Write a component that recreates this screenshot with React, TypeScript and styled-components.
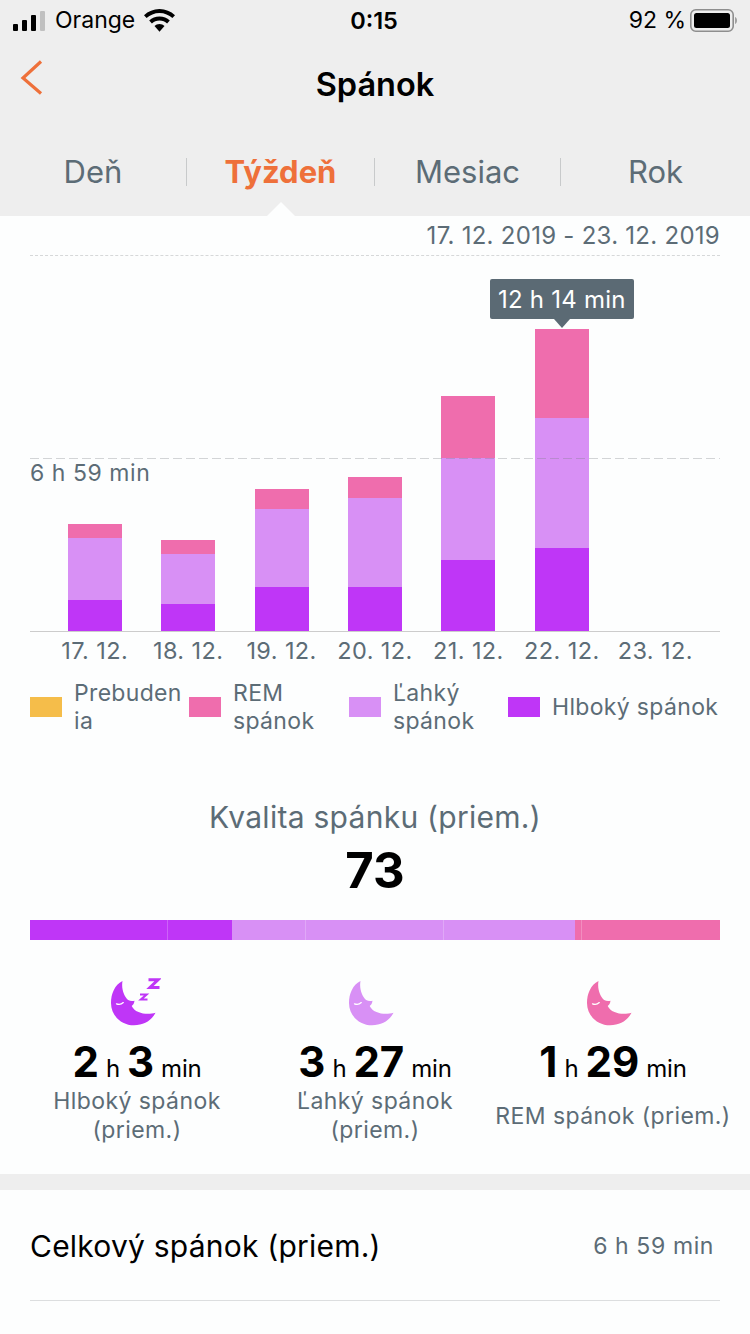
import React from 'react';
import styled, { createGlobalStyle } from 'styled-components';

const GlobalStyle = createGlobalStyle`
  html, body {
    margin: 0;
    padding: 0;
    background: #fdfefe;
  }
  * {
    box-sizing: border-box;
  }
`;

const DEEP = '#bf36f7';
const LIGHT = '#d890f5';
const REM = '#ef6dad';
const AWAKE = '#f5bd4a';
const MUTED = '#5c6c76';
const ACCENT = '#ee703a';

const Page = styled.div`
  width: 750px;
  height: 1334px;
  overflow: hidden;
  background: #fdfefe;
  font-family: Inter, 'Noto Sans', sans-serif;
  color: ${MUTED};
`;

const Header = styled.header`
  background: #eeeeee;
  height: 216px;
`;

const StatusBar = styled.div`
  height: 40px;
  padding: 0 13px 0 13px;
  display: grid;
  grid-template-columns: 1fr auto 1fr;
  align-items: center;
  color: #000;
  font-size: 23px;
`;

const StatusLeft = styled.div`
  display: flex;
  align-items: center;
  gap: 9px;
`;

const StatusRight = styled.div`
  display: flex;
  align-items: center;
  justify-content: flex-end;
  gap: 4px;
`;

const Clock = styled.div`
  font-weight: 600;
  font-size: 23.5px;
  margin-right: 2px;
`;

const NavBar = styled.div`
  position: relative;
  height: 88px;
  display: flex;
  align-items: center;
  justify-content: center;
  color: #000;
  font-size: 32.500px;
  font-weight: 600;
`;

const BackButton = styled.button`
  position: absolute;
  left: 20px;
  top: 20px;
  padding: 0;
  border: none;
  background: none;
  display: flex;
`;

const Tabs = styled.nav`
  position: relative;
  height: 88px;
  display: grid;
  grid-template-columns: 187px 188px 186px 189px;
  align-items: center;
`;

const Tab = styled.div<{ $active?: boolean; $divider?: boolean }>`
  position: relative;
  text-align: center;
  font-size: 31px;
  font-weight: ${p => (p.$active ? 700 : 400)};
  color: ${p => (p.$active ? ACCENT : MUTED)};
  border-right: ${p => (p.$divider ? '1px solid #c8cacb' : 'none')};
  height: 28px;
  line-height: 28px;
`;

const Notch = styled.div`
  position: absolute;
  left: 267px;
  bottom: 0;
  width: 0;
  height: 0;
  border-left: 14px solid transparent;
  border-right: 14px solid transparent;
  border-bottom: 14px solid #fdfefe;
`;

const Content = styled.section`
  padding: 0 30px;
`;

const DateRange = styled.div`
  height: 40px;
  padding-top: 5px;
  text-align: right;
  font-size: 24px;
  line-height: 30px;
  letter-spacing: 0.27px;
  border-bottom: 1px dashed #d6d8d9;
`;

const Chart = styled.div`
  position: relative;
  height: 376px;
  padding: 0 18px;
  display: grid;
  grid-template-columns: repeat(7, 1fr);
  align-items: end;
  border-bottom: 1px solid #cccccc;
`;

const GridLine = styled.div`
  position: absolute;
  z-index: 1;
  left: 0;
  right: 0;
  top: 202px;
  height: 1px;
  background: repeating-linear-gradient(
    to right,
    rgba(120, 125, 130, 0.32) 0 9px,
    transparent 9px 13px
  );
`;

const AverageLabel = styled.div`
  position: absolute;
  left: 0;
  top: 202px;
  font-size: 23px;
  line-height: 30px;
  letter-spacing: 0.55px;
`;

const Column = styled.div`
  position: relative;
  width: 54px;
  justify-self: center;
  display: flex;
  flex-direction: column;
`;

const Segment = styled.div<{ $h: number; $color: string }>`
  height: ${p => p.$h}px;
  background: ${p => p.$color};
`;

const Tooltip = styled.div`
  position: absolute;
  left: 50%;
  bottom: calc(100% + 10px);
  transform: translateX(-50%);
  width: 144px;
  height: 40px;
  border-radius: 2px;
  background: #5b6a74;
  color: #fff;
  font-size: 24px;
  line-height: 42px;
  letter-spacing: 0.22px;
  text-align: center;
  white-space: nowrap;

  &::after {
    content: '';
    position: absolute;
    left: 50%;
    top: 100%;
    margin-left: -8px;
    border-left: 8px solid transparent;
    border-right: 8px solid transparent;
    border-top: 9px solid #5b6a74;
  }
`;

const DayLabels = styled.div`
  height: 36px;
  padding: 0 18px;
  display: grid;
  grid-template-columns: repeat(7, 1fr);
  align-items: center;
  text-align: center;
  font-size: 23.500px;
  letter-spacing: 0.4px;
`;

const Legend = styled.div`
  margin-top: 11px;
  height: 56px;
  display: grid;
  grid-template-columns: 159px 160px 159px 1fr;
  align-items: center;
`;

const LegendItem = styled.div`
  display: flex;
  align-items: center;
  gap: 12px;
`;

const Swatch = styled.span<{ $color: string }>`
  flex: none;
  width: 32px;
  height: 20px;
  background: ${p => p.$color};
`;

const LegendLabel = styled.span`
  width: 110px;
  font-size: 23px;
  line-height: 28px;
  letter-spacing: 0.33px;
  overflow-wrap: anywhere;
`;

const LegendLabelWide = styled(LegendLabel)`
  width: auto;
  white-space: nowrap;
`;

const QualityTitle = styled.h2`
  margin: 62px 0 0;
  height: 40px;
  text-align: center;
  font-size: 30px;
  line-height: 40px;
  letter-spacing: 0.27px;
  font-weight: 400;
`;

const QualityScore = styled.div`
  margin-top: 5px;
  height: 58px;
  text-align: center;
  color: #000;
  font-size: 49px;
  line-height: 58px;
  font-weight: 700;
`;

const QualityBar = styled.div`
  position: relative;
  margin-top: 20px;
  height: 20px;
  display: flex;
`;

const QualityPart = styled.div<{ $w: number; $color: string }>`
  width: ${p => p.$w}px;
  background: ${p => p.$color};
`;

const QualityTicks = styled.div`
  position: absolute;
  inset: 0;
  display: grid;
  grid-template-columns: repeat(5, 1fr);
`;

const QualityTick = styled.div`
  border-right: 1px solid rgba(255, 255, 255, 0.22);

  &:last-child {
    border-right: none;
  }
`;

const Stats = styled.div`
  padding: 38px 18px 0;
  height: 234px;
  display: grid;
  grid-template-columns: repeat(3, 238px);
`;

const Stat = styled.div`
  display: flex;
  flex-direction: column;
  align-items: center;
`;

const MoonIcon = styled.svg`
  display: block;
  width: 50px;
  height: 48px;
  margin-left: -3px;
`;

const StatValue = styled.div`
  margin-top: 14px;
  height: 44px;
  display: flex;
  align-items: baseline;
  gap: 7px;
  color: #000;
  font-size: 24px;
  line-height: 44px;
`;

const StatNumber = styled.span`
  font-size: 42px;
  font-weight: 700;
`;

const StatUnit = styled.span`
  letter-spacing: -0.2px;
`;

const StatLabel = styled.div`
  margin-top: 3px;
  flex: 0 0 58px;
  display: flex;
  align-items: center;
  text-align: center;
  font-size: 23px;
  line-height: 29px;
  letter-spacing: 0.42px;
  white-space: pre-line;
`;

const Band = styled.div`
  height: 16px;
  background: #eeeeee;
`;

const SummaryRow = styled.div`
  margin: 0 30px;
  height: 111px;
  display: flex;
  align-items: center;
  justify-content: space-between;
  padding: 1px 6px 0 0;
  border-bottom: 1px solid #dcdedf;
`;

const SummaryTitle = styled.div`
  color: #000;
  font-size: 30px;
  letter-spacing: 0.22px;
`;

const SummaryValue = styled.div`
  font-size: 23px;
  letter-spacing: 0.6px;
`;

const bars = [
  { day: '17. 12.', rem: 14, light: 62, deep: 31 },
  { day: '18. 12.', rem: 14, light: 50, deep: 27 },
  { day: '19. 12.', rem: 20, light: 78, deep: 44 },
  { day: '20. 12.', rem: 21, light: 89, deep: 44 },
  { day: '21. 12.', rem: 62, light: 102, deep: 71 },
  { day: '22. 12.', rem: 89, light: 130, deep: 83, tip: '12 h 14 min' },
  { day: '23. 12.', rem: 0, light: 0, deep: 0 },
];

const legend = [
  { color: AWAKE, label: 'Prebudenia' },
  { color: REM, label: 'REM spánok' },
  { color: LIGHT, label: 'Ľahký spánok' },
];

const stats = [
  { color: DEEP, h: '2', m: '3', label: 'Hlboký spánok\n(priem.)', zzz: true },
  { color: LIGHT, h: '3', m: '27', label: 'Ľahký spánok\n(priem.)' },
  { color: REM, h: '1', m: '29', label: 'REM spánok (priem.)' },
];

const Moon: React.FC<{ color: string; zzz?: boolean }> = ({ color, zzz }) => (
  <MoonIcon viewBox="0 -3 50 48">
    <path
      fill={color}
      d="M11.500 0C3.500 4 0 13 0 22c0 12.500 10 22.300 23 22.300 10 0 18-5.300 21.500-12.600-5 1.600-12 1.600-17-.7C24 30 22 27.500 20.700 25c1.500-1 2.500-3 2.800-5.300-2 .7-4.500.5-6.300-.7C13.500 16 10 8 11.500 0Z"
    />
    <path fill="none" stroke="#fff" strokeWidth="1.300" strokeLinecap="round" d="M5.500 22.800c2 .8 4.800.6 6.800-1.200" />
    {zzz && (
      <g fill="none" stroke={color} strokeWidth="3">
        <path d="M37.500-1.200h9.500l-8 7.700h9.500" />
        <path d="M29 13.500h6.500l-5.500 5h6.500" strokeWidth="2.200" />
      </g>
    )}
  </MoonIcon>
);

const StatusIcons = {
  Signal: () => (
    <svg width="33" height="21" viewBox="0 0 33 21">
      <rect x="0" y="14" width="5" height="7" rx="1" fill="#000" />
      <rect x="9" y="10" width="5" height="11" rx="1" fill="#000" />
      <rect x="18" y="5" width="5" height="16" rx="1" fill="#000" />
      <rect x="27" y="1" width="5" height="20" rx="1" fill="#c0c0c0" />
    </svg>
  ),
  Wifi: () => (
    <svg width="31" height="23" viewBox="0 0 31 23">
      <path fill="#000" d="M15.500 0C9.500 0 4.200 2.300 0 6.200l2.600 2.900C6 5.900 10.500 3.900 15.500 3.900s9.500 2 12.900 5.200L31 6.200C26.800 2.300 21.500 0 15.500 0Z" />
      <path fill="#000" d="M15.500 7.500c-4 0-7.600 1.500-10.300 4l2.700 3c2-1.800 4.600-3 7.600-3s5.600 1.200 7.600 3l2.700-3c-2.700-2.500-6.300-4-10.300-4Z" />
      <path fill="#000" d="M15.500 15c-2 0-3.700.7-5 2l5 5.700 5-5.700c-1.300-1.300-3-2-5-2Z" />
    </svg>
  ),
  Battery: () => (
    <svg width="47" height="23" viewBox="0 0 47 23">
      <rect x=".8" y=".8" width="42.400" height="21.400" rx="5" fill="none" stroke="#8e8e8e" strokeWidth="1.600" />
      <rect x="4" y="4" width="36" height="15" rx="2.500" fill="#000" />
      <path d="M45 8c1.300.4 2 1.800 2 3.500s-.7 3.100-2 3.500Z" fill="#a0a0a0" />
    </svg>
  ),
};

export default function App() {
  return (
    <Page>
      <GlobalStyle />
      <Header>
        <StatusBar>
          <StatusLeft>
            <StatusIcons.Signal />
            <span>Orange</span>
            <StatusIcons.Wifi />
          </StatusLeft>
          <Clock>0:15</Clock>
          <StatusRight>
            <span>92 %</span>
            <StatusIcons.Battery />
          </StatusRight>
        </StatusBar>
        <NavBar>
          <BackButton aria-label="back">
            <svg width="24" height="36" viewBox="0 0 24 36">
              <path d="M21 1.500 3 18 21 33.500" fill="none" stroke={ACCENT} strokeWidth="3.200" />
            </svg>
          </BackButton>
          Spánok
        </NavBar>
        <Tabs>
          <Tab $divider>Deň</Tab>
          <Tab $active $divider>Týždeň</Tab>
          <Tab $divider>Mesiac</Tab>
          <Tab>Rok</Tab>
          <Notch />
        </Tabs>
      </Header>

      <Content>
        <DateRange>17. 12. 2019 - 23. 12. 2019</DateRange>
        <Chart>
          <GridLine />
          <AverageLabel>6 h 59 min</AverageLabel>
          {bars.map(b => (
            <Column key={b.day}>
              {b.tip && <Tooltip>{b.tip}</Tooltip>}
              <Segment $h={b.rem} $color={REM} />
              <Segment $h={b.light} $color={LIGHT} />
              <Segment $h={b.deep} $color={DEEP} />
            </Column>
          ))}
        </Chart>
        <DayLabels>
          {bars.map(b => (
            <span key={b.day}>{b.day}</span>
          ))}
        </DayLabels>
        <Legend>
          {legend.map(l => (
            <LegendItem key={l.label}>
              <Swatch $color={l.color} />
              <LegendLabel>{l.label}</LegendLabel>
            </LegendItem>
          ))}
          <LegendItem>
            <Swatch $color={DEEP} />
            <LegendLabelWide>Hlboký spánok</LegendLabelWide>
          </LegendItem>
        </Legend>

        <QualityTitle>Kvalita spánku (priem.)</QualityTitle>
        <QualityScore>73</QualityScore>
        <QualityBar>
          <QualityPart $w={202} $color={DEEP} />
          <QualityPart $w={343} $color={LIGHT} />
          <QualityPart $w={145} $color={REM} />
          <QualityTicks>
            {[0, 1, 2, 3, 4].map(i => (
              <QualityTick key={i} />
            ))}
          </QualityTicks>
        </QualityBar>
      </Content>

      <Stats>
        {stats.map(s => (
          <Stat key={s.label}>
            <Moon color={s.color} zzz={s.zzz} />
            <StatValue>
              <StatNumber>{s.h}</StatNumber>
              <StatUnit>h</StatUnit>
              <StatNumber>{s.m}</StatNumber>
              <StatUnit>min</StatUnit>
            </StatValue>
            <StatLabel>{s.label}</StatLabel>
          </Stat>
        ))}
      </Stats>

      <Band />
      <SummaryRow>
        <SummaryTitle>Celkový spánok (priem.)</SummaryTitle>
        <SummaryValue>6 h 59 min</SummaryValue>
      </SummaryRow>
    </Page>
  );
}
